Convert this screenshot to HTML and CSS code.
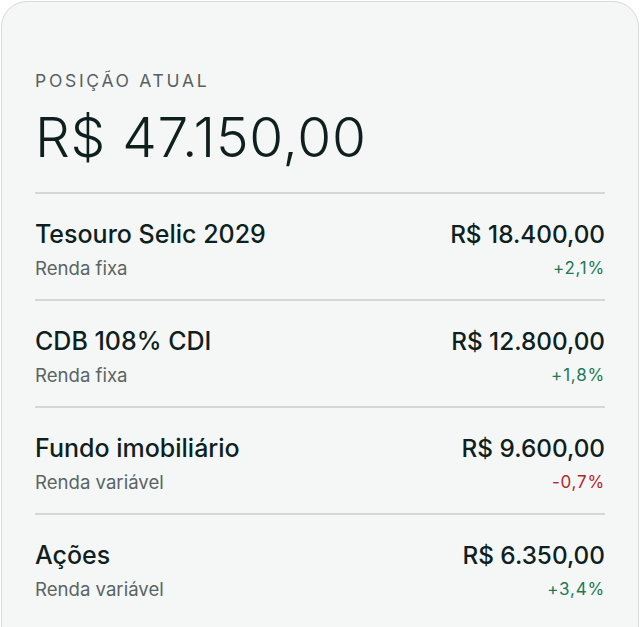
FILE: index.html
```html
<!DOCTYPE html>
<html lang="pt-BR">

<head>
    <meta charset="UTF-8">
    <meta name="viewport" content="width=device-width, initial-scale=1.0">
    <title>Posição atual</title>
    <link rel="stylesheet" href="styles.css">
</head>

<body>

    <div class="card">
        <div class="label">Posição atual</div>
        <div class="total">R$ 47.150,00</div>

        <ul class="positions">
            <li class="position">
                <div class="info">
                    <div class="name">Tesouro Selic 2029</div>
                    <div class="kind">Renda fixa</div>
                </div>
                <div class="values">
                    <div class="amount">R$ 18.400,00</div>
                    <div class="change up">+2,1%</div>
                </div>
            </li>
            <li class="position">
                <div class="info">
                    <div class="name">CDB 108% CDI</div>
                    <div class="kind">Renda fixa</div>
                </div>
                <div class="values">
                    <div class="amount">R$ 12.800,00</div>
                    <div class="change up">+1,8%</div>
                </div>
            </li>
            <li class="position">
                <div class="info">
                    <div class="name">Fundo imobiliário</div>
                    <div class="kind">Renda variável</div>
                </div>
                <div class="values">
                    <div class="amount">R$ 9.600,00</div>
                    <div class="change down">-0,7%</div>
                </div>
            </li>
            <li class="position">
                <div class="info">
                    <div class="name">Ações</div>
                    <div class="kind">Renda variável</div>
                </div>
                <div class="values">
                    <div class="amount">R$ 6.350,00</div>
                    <div class="change up">+3,4%</div>
                </div>
            </li>
        </ul>
    </div>

</body>

</html>
```

FILE: styles.css
```css
/* Styles généraux */
* {
    margin: 0;
    padding: 0;
    box-sizing: border-box;
}

body {
    background-color: #ffffff;
    font-family: Inter, "Noto Sans", sans-serif;
    color: #10201f;
    overflow: hidden;
}

/* Carte principale */
.card {
    margin: 1px 1px 0 1px;
    padding: 69px 33px 40px;
    background-color: #f5f7f7;
    border: 1px solid #d6dada;
    border-radius: 26px;
}

.label {
    font-size: 17.5px;
    line-height: 20px;
    letter-spacing: 2.7px;
    text-transform: uppercase;
    color: #56605f;
}

.total {
    margin-top: 14px;
    font-size: 55px;
    line-height: 64px;
    font-weight: 300;
    letter-spacing: 0.7px;
    color: #0f1f1e;
    padding-bottom: 23px;
    border-bottom: 2px solid #d3d7d7;
}

/* Liste des positions */
.positions {
    list-style: none;
}

.position {
    display: flex;
    justify-content: space-between;
    align-items: flex-start;
    height: 107px;
    padding-top: 25px;
    border-bottom: 2px solid #d3d7d7;
}

.position:last-child {
    border-bottom: none;
}

.name,
.amount {
    font-size: 25px;
    line-height: 30px;
    font-weight: 500;
    color: #0f1f1e;
}

.amount {
    font-size: 24.3px;
}

.kind,
.change {
    margin-top: 8px;
    font-size: 18.6px;
    line-height: 22px;
    color: #5a6563;
}

.values {
    text-align: right;
}

.change {
    font-size: 17px;
    letter-spacing: 0.8px;
}

.change.up {
    color: #1d7a55;
}

.change.down {
    color: #b3272b;
}
```
